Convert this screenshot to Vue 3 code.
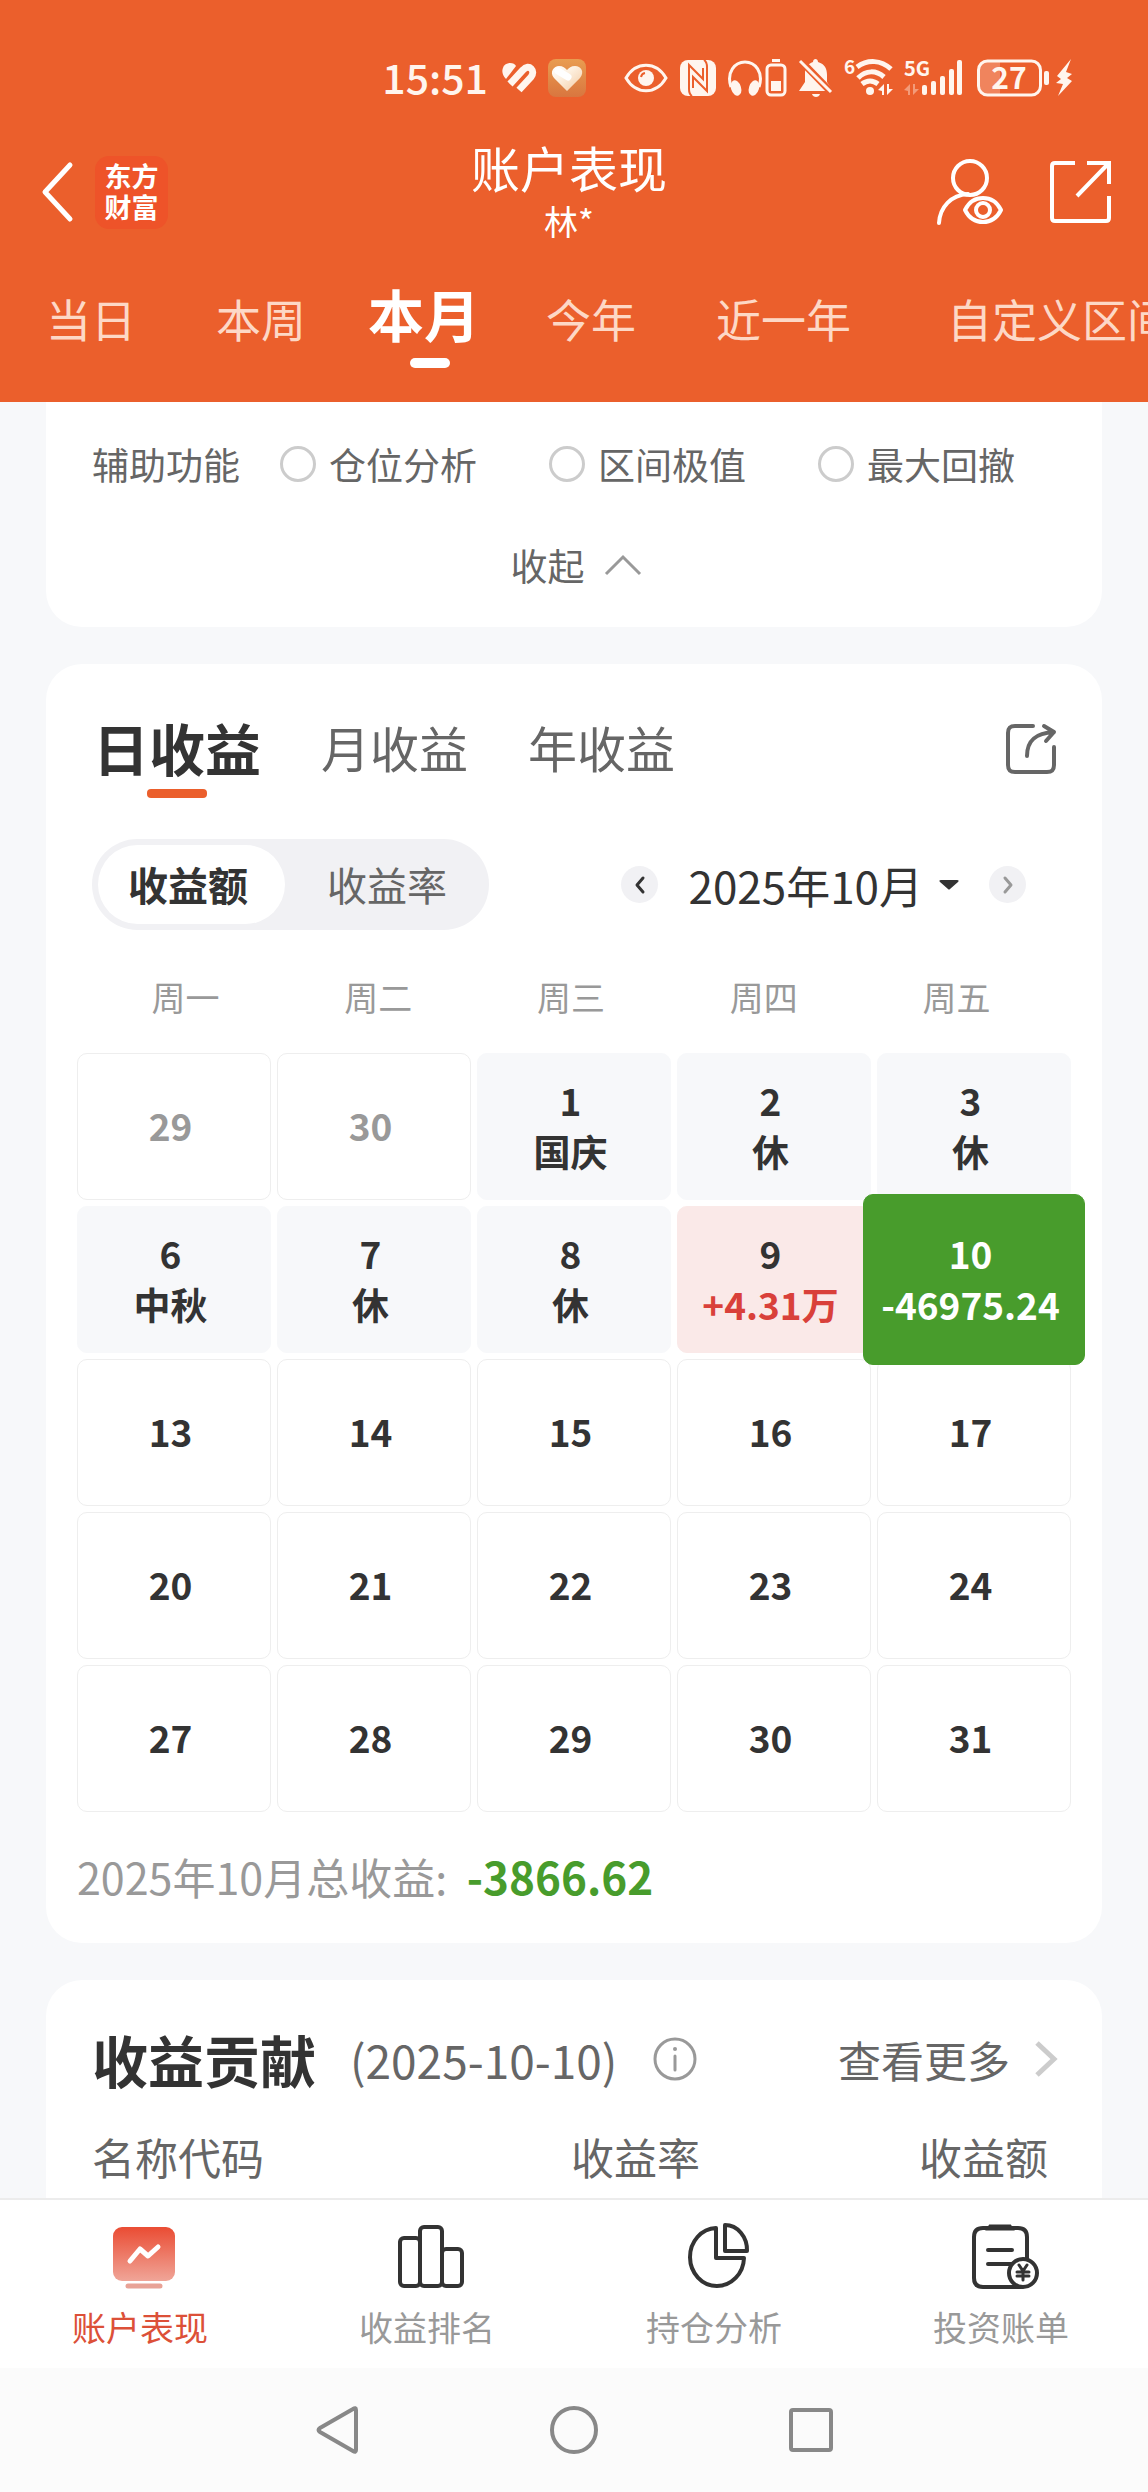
<script setup>
import { ref } from 'vue'

const ranges = ['当日', '本周', '本月', '今年', '近一年', '自定义区间']
const range = ref('本月')

const helpers = ['仓位分析', '区间极值', '最大回撤']
const helper = ref('')

const periods = ['日收益', '月收益', '年收益']
const period = ref('日收益')

const units = ['收益额', '收益率']
const unit = ref('收益额')

const weekdays = ['周一', '周二', '周三', '周四', '周五']
const days = [
  { day: 29, kind: 'outside' },
  { day: 30, kind: 'outside' },
  { day: 1, note: '国庆', kind: 'holiday' },
  { day: 2, note: '休', kind: 'holiday' },
  { day: 3, note: '休', kind: 'holiday' },
  { day: 6, note: '中秋', kind: 'holiday' },
  { day: 7, note: '休', kind: 'holiday' },
  { day: 8, note: '休', kind: 'holiday' },
  { day: 9, note: '+4.31万', kind: 'gain' },
  { day: 10, note: '-46975.24', kind: 'selected' },
  ...[13, 14, 15, 16, 17, 20, 21, 22, 23, 24, 27, 28, 29, 30, 31].map((day) => ({ day, kind: 'plain' })),
]
</script>

<template>
  <div class="app">
    <header class="top">
      <div class="status">
        <time class="clock">15:51</time>
        <svg width="36" height="40" viewBox="0 0 36 40" fill="none" stroke="#fff5ee" stroke-width="7">
          <path d="M4 21 C-3 14 1 5 8 5 C11 5 13 6 14 8 Z" fill="#fff5ee" stroke="none" />
          <path d="M8 26 L21 12 C27 5 34 13 29 19 L17 32" />
        </svg>
        <svg class="heart-app" width="38" height="40" viewBox="0 0 38 40">
          <defs>
            <linearGradient id="heartBg" x1="0" y1="0" x2="0" y2="1"><stop offset="0" stop-color="#e99c50" /><stop offset="1" stop-color="#d9763f" /></linearGradient>
            <linearGradient id="heartFg" x1="0" y1="0" x2="1" y2="1"><stop offset="0" stop-color="#fff" /><stop offset="0.4" stop-color="#fdf0e0" /><stop offset="1" stop-color="#f3c9a0" /></linearGradient>
          </defs>
          <rect y="1" width="38" height="38" rx="8" fill="url(#heartBg)" />
          <path d="M19 33 L6 20 C1 14 6 8 11 8 C15 8 17 10 19 12 C21 10 23 8 27 8 C33 8 37 14 32 20 Z" fill="url(#heartFg)" />
          <path d="M10 13 L20 19" stroke="#fff" stroke-width="7" stroke-linecap="round" />
        </svg>
        <svg width="46" height="40" viewBox="0 0 46 40" fill="none" stroke="#fff5ee" stroke-width="3">
          <path d="M2 20 C12 3 32 3 42 20 C32 37 12 37 2 20 Z" />
          <circle cx="22" cy="20" r="8" fill="#fff5ee" stroke="none" />
          <path d="M17 19 A5 5 0 0 1 21 15" stroke="#eb5f2c" stroke-width="2" />
        </svg>
        <svg width="38" height="40" viewBox="0 0 38 40" fill="none">
          <rect y="2" width="36" height="36" rx="8" fill="#fff5ee" />
          <path d="M12 38 C9 36 9 34 9 31 V7 L23 21 V10 M24 2 C27 4 27 6 27 9 V33 L13 19 V30" stroke="#eb5f2c" stroke-width="2" />
        </svg>
        <svg width="60" height="40" viewBox="0 0 60 40" fill="none" stroke="#fff5ee" stroke-width="3">
          <path d="M3 29 C-2 14 7 4 17 4 C27 4 36 14 31 29" />
          <ellipse cx="8" cy="30" rx="5" ry="8" transform="rotate(-18 8 30)" fill="#fff5ee" stroke="none" />
          <ellipse cx="26" cy="30" rx="5" ry="8" transform="rotate(18 26 30)" fill="#fff5ee" stroke="none" />
          <rect x="39" y="7" width="18" height="30" rx="4" />
          <path d="M44 2.500 h8" />
          <rect x="43" y="23" width="10" height="10" fill="#fff5ee" stroke="none" />
        </svg>
        <svg width="36" height="40" viewBox="0 0 36 40" fill="#fff5ee">
          <path d="M15 4 C15 0 20 0 20 4 C27 6 29 11 29 17 V24 L35 33 H1 L7 24 V15 C7 9 10 6 15 4 Z" />
          <path d="M14 36 H22 C21 40 15 40 14 36 Z" />
          <path d="M1 1 L34 35" stroke="#eb5f2c" stroke-width="7" />
          <path d="M2 3 L33 34" stroke="#fff5ee" stroke-width="3" />
        </svg>
        <svg width="50" height="40" viewBox="0 0 50 40" fill="none" stroke="#fff5ee" stroke-width="5">
          <text class="glyph" x="0" y="16" font-size="19">6</text>
          <path d="M13 9 C24 1 37 2 47 11" />
          <path d="M14 20 C22 12 32 12 40 19" />
          <path d="M18 26 C23 22 29 22 34 26" />
          <circle cx="26" cy="33" r="4" fill="#fff5ee" stroke="none" />
          <path d="M34 32 L40 26 V37 H38 V33 Z M43 26 V37 L49 31 H45 V26 Z" fill="#fff5ee" stroke="none" />
        </svg>
        <svg width="63" height="40" viewBox="0 0 63 40" fill="#fff5ee">
          <text class="glyph" x="0" y="18" font-size="20">5G</text>
          <path opacity="0.4" d="M0 32 L6 26 V37 H4 V33 Z M9 26 V37 L15 31 H11 V26 Z" />
          <rect x="18" y="27" width="5" height="10" rx="2" />
          <rect x="27" y="23" width="5" height="14" rx="2" />
          <rect x="36" y="18" width="5" height="19" rx="2" />
          <rect x="45" y="11" width="5" height="26" rx="2" />
          <rect x="53" y="2" width="5" height="35" rx="2" />
        </svg>
        <svg width="95" height="40" viewBox="0 0 95 40" fill="#fff5ee">
          <path d="M10 4 H23 V36 H10 C5 36 3 33 3 29 V11 C3 7 5 4 10 4 Z" opacity="0.25" />
          <rect x="1.500" y="3" width="62" height="34" rx="9" fill="none" stroke="#fff5ee" stroke-width="3" />
          <text class="glyph" x="32" y="31" font-size="30" text-anchor="middle">27</text>
          <rect x="67" y="13" width="5" height="14" rx="2" />
          <path d="M94 1 L80 18 L84 21 L79 25 L86 26 L81 38 L95 23 L90 20 L95 16 L89 14 Z" />
        </svg>
      </div>

      <div class="titlebar">
        <div class="left">
          <button class="icon-btn back" aria-label="返回">
            <svg width="32" height="56" viewBox="0 0 32 56" fill="none" stroke="#fff" stroke-width="5" stroke-linecap="round" stroke-linejoin="round"><path d="M29 2 L4 29 L29 56" transform="translate(0 -1)" /></svg>
          </button>
          <div class="logo">东方<br />财富</div>
        </div>
        <div class="heading">
          <h1>账户表现</h1>
          <p>林*</p>
        </div>
        <div class="right">
          <button class="icon-btn" aria-label="账户可见性">
            <svg width="66" height="66" viewBox="0 0 66 66" fill="none" stroke="#fff" stroke-width="4" stroke-linecap="round">
              <circle cx="33" cy="19" r="17" />
              <path d="M2 64 C3 48 14 36 31 35" />
              <path d="M28 51 Q34 39 46 39 Q58 39 64 51 Q58 63 46 63 Q34 63 28 51 Z" fill="#eb5f2c" stroke-linejoin="round" />
              <circle cx="46" cy="51" r="7" />
            </svg>
          </button>
          <button class="icon-btn" aria-label="分享">
            <svg width="66" height="66" viewBox="0 0 66 66" fill="none" stroke="#fff" stroke-width="4">
              <path d="M25 4 H5 C3 4 2 5 2 7 V59 C2 61 3 62 5 62 H56 C58 62 59 61 59 59 V37" />
              <path d="M37 4 H59 V25 M58 5 L27 37" />
            </svg>
          </button>
        </div>
      </div>

      <nav class="ranges" aria-label="区间">
        <button v-for="r in ranges" :key="r" :class="{ active: r === range, custom: r === '自定义区间' }" @click="range = r">{{ r }}</button>
      </nav>
    </header>

    <main>
      <section class="card tools">
        <div class="helper-row">
          <span>辅助功能</span>
          <div class="helper-list">
            <label v-for="h in helpers" :key="h"><input v-model="helper" type="radio" name="helper" :value="h" />{{ h }}</label>
          </div>
        </div>
        <button class="collapse">
          收起
          <svg width="36" height="20" viewBox="0 0 36 20" fill="none" stroke="#999" stroke-width="3"><path d="M1 19 L18 2 L35 19" /></svg>
        </button>
      </section>

      <section class="card calendar">
        <div class="periods">
          <button v-for="p in periods" :key="p" :class="{ active: p === period }" @click="period = p">{{ p }}</button>
          <button class="icon-btn share" aria-label="分享收益">
            <svg width="50" height="50" viewBox="0 0 50 50" fill="none" stroke="#666" stroke-width="4" stroke-linecap="round" stroke-linejoin="round">
              <path d="M27 2 H9 C4 2 2 4 2 9 V41 C2 46 4 48 9 48 H41 C46 48 48 46 48 41 V23" />
              <path d="M21 32 C21 17 29 9 48 8 M38 2 L48 8 L40 17" />
            </svg>
          </button>
        </div>

        <div class="controls">
          <div class="segment">
            <button v-for="u in units" :key="u" :class="{ active: u === unit }" @click="unit = u">{{ u }}</button>
          </div>
          <div class="month">
            <button class="step" aria-label="上个月">
              <svg width="10" height="18" viewBox="0 0 10 18" fill="none" stroke="#333" stroke-width="3" stroke-linecap="round" stroke-linejoin="round"><path d="M8 2 L2 9 L8 16" /></svg>
            </button>
            <button class="current">
              2025年10月
              <svg width="20" height="10" viewBox="0 0 20 10" fill="#333"><path d="M2 0 H18 C20 0 20 1 19 2 L11 9 Q10 10 9 9 L1 2 C0 1 0 0 2 0 Z" /></svg>
            </button>
            <button class="step" aria-label="下个月">
              <svg width="10" height="18" viewBox="0 0 10 18" fill="none" stroke="#999" stroke-width="3" stroke-linecap="round" stroke-linejoin="round"><path d="M2 2 L8 9 L2 16" /></svg>
            </button>
          </div>
        </div>

        <div class="weekdays"><span v-for="w in weekdays" :key="w">{{ w }}</span></div>
        <div class="days">
          <button v-for="(d, i) in days" :key="i" class="day" :class="d.kind">
            <span>{{ d.day }}</span>
            <span v-if="d.note" class="note">{{ d.note }}</span>
          </button>
        </div>
        <p class="total">2025年10月总收益: <strong>-3866.62</strong></p>
      </section>

      <section class="card contrib">
        <div class="contrib-head">
          <h2>收益贡献</h2>
          <span class="date">(2025-10-10)</span>
          <button class="icon-btn" aria-label="说明">
            <svg width="44" height="44" viewBox="0 0 44 44" fill="none" stroke="#999" stroke-width="3">
              <circle cx="22" cy="22" r="20" /><path d="M22 19 V33" stroke-linecap="round" /><circle cx="22" cy="12" r="2" fill="#999" stroke="none" />
            </svg>
          </button>
          <a href="#" class="more">
            查看更多
            <svg width="24" height="36" viewBox="0 0 24 36" fill="none" stroke="#ccc" stroke-width="5"><path d="M3 2 L20 18 L3 34" /></svg>
          </a>
        </div>
        <table>
          <thead><tr><th>名称代码</th><th>收益率</th><th>收益额</th></tr></thead>
        </table>
      </section>
    </main>

    <nav class="tabbar" aria-label="主导航">
      <a href="#" class="active">
        <svg width="68" height="66" viewBox="0 0 68 66" fill="none">
          <defs><linearGradient id="screen" x1="0" y1="0" x2="0" y2="1"><stop offset="0" stop-color="#ea4c33" /><stop offset="1" stop-color="#f0a598" /></linearGradient></defs>
          <rect x="3" y="4" width="62" height="54" rx="9" fill="url(#screen)" />
          <path d="M20 38 L30 26 L38 33 L48 24" stroke="#fff" stroke-width="5" stroke-linecap="round" stroke-linejoin="round" />
          <path d="M18 63 H50" stroke="#e8a296" stroke-width="5" stroke-linecap="round" />
        </svg>
        <span>账户表现</span>
      </a>
      <a href="#">
        <svg width="68" height="66" viewBox="0 0 68 66" fill="none" stroke="#333" stroke-width="4">
          <rect x="3" y="15" width="20" height="48" rx="4" /><rect x="23" y="4" width="22" height="59" rx="4" /><rect x="45" y="26" width="20" height="37" rx="4" />
        </svg>
        <span>收益排名</span>
      </a>
      <a href="#">
        <svg width="68" height="66" viewBox="0 0 68 66" fill="none" stroke="#333" stroke-width="4" stroke-linejoin="round">
          <path d="M32 5 A27 29 0 1 0 60 35 H32 Z" /><path d="M41 2 A22 25 0 0 1 63 28 H41 Z" />
        </svg>
        <span>持仓分析</span>
      </a>
      <a href="#">
        <svg width="68" height="66" viewBox="0 0 68 66" fill="none" stroke="#333" stroke-width="4" stroke-linecap="round">
          <path d="M56 36 V14 C56 8 53 5 47 5 H12 C6 5 3 8 3 14 V55 C3 61 6 64 12 64 H50" />
          <path d="M19 3 H39 L41 6 H17 Z" fill="#333" stroke-width="3" />
          <path d="M17 27 H41 M17 41 H42" />
          <circle cx="52" cy="50" r="14" fill="#fff" />
          <path d="M48 42 L52 48 L56 42 M52 48 V57 M46 49 H58 M46 53 H58" stroke-width="3" />
        </svg>
        <span>投资账单</span>
      </a>
    </nav>

    <div class="system">
      <button class="icon-btn" aria-label="系统返回"><svg width="48" height="48" viewBox="0 0 48 48"><path d="M43 4 V44 Q43 47 40 45 L7 26 Q4 24 7 22 L40 3 Q43 1 43 4 Z" /></svg></button>
      <button class="icon-btn" aria-label="主屏幕"><svg width="48" height="48" viewBox="0 0 48 48"><circle cx="24" cy="24" r="22" /></svg></button>
      <button class="icon-btn" aria-label="最近任务"><svg width="48" height="48" viewBox="0 0 48 48"><rect x="4" y="4" width="40" height="40" rx="2" /></svg></button>
    </div>
  </div>
</template>

<style>
body {
  margin: 0;
  background: #f7f8fa;
}
</style>

<style scoped>
.app {
  display: flex;
  flex-direction: column;
  min-height: 100vh;
  overflow-x: hidden;
  background: #f7f8fa;
  color: #333;
  font-family: "Noto Sans CJK SC", "Noto Sans", sans-serif;
}
.app * {
  box-sizing: border-box;
}
button {
  padding: 0;
  border: 0;
  background: none;
  color: inherit;
  font: inherit;
  white-space: nowrap;
}
a {
  color: inherit;
  text-decoration: none;
}
h1, h2, p {
  margin: 0;
  font-weight: 400;
}
svg {
  display: block;
  flex: none;
  overflow: visible;
}
.icon-btn {
  flex: none;
}

/* header */
.top {
  background: #eb5f2c;
  color: #fff;
}
.status {
  display: flex;
  justify-content: flex-end;
  align-items: center;
  gap: 10px;
  padding: 58px 76px 40px;
}
.clock {
  height: 40px;
  margin-right: 4px;
  font-size: 41px;
  font-weight: 500;
  line-height: 36px;
  color: #fff5ee;
}
.heart-app {
  margin-right: 28px;
}
.glyph {
  fill: #fff5ee;
  stroke: none;
  font-weight: 700;
}
.titlebar {
  display: grid;
  grid-template-columns: 1fr auto 1fr;
  align-items: center;
  padding: 0 32px 0 22px;
}
.left {
  display: flex;
  align-items: center;
}
.back {
  width: 73px;
  padding-left: 19px;
}
.logo {
  width: 73px;
  height: 73px;
  padding-top: 4px;
  border-radius: 14px;
  background: #ee5329;
  text-align: center;
  font-size: 27px;
  font-weight: 700;
  line-height: 31px;
}
.heading {
  text-align: center;
}
.heading h1 {
  font-size: 49px;
  line-height: 58px;
}
.heading p {
  font-size: 34px;
  line-height: 50px;
}
.right {
  display: flex;
  justify-content: flex-end;
  gap: 47px;
}
.ranges {
  display: flex;
  align-items: flex-start;
  gap: 80px;
  padding: 43px 0 34px 46px;
  overflow: hidden;
}
.ranges button {
  flex: none;
  font-size: 45px;
  line-height: 60px;
  color: #fdd8c6;
}
.ranges .active {
  display: flex;
  flex-direction: column;
  align-items: center;
  margin: 0 -14px 0 -18px;
  font-size: 56px;
  font-weight: 700;
  line-height: 48px;
  color: #fff;
}
.ranges .active::after {
  content: "";
  width: 40px;
  height: 10px;
  margin: 21px 0 0 12px;
  border-radius: 5px;
  background: #fff;
}
.ranges .custom {
  margin-left: 16px;
}

/* cards */
main {
  flex: 1;
  display: flex;
  flex-direction: column;
  gap: 37px;
  padding: 0 46px;
}
.card {
  border-radius: 36px;
  background: #fff;
}
.tools {
  padding: 34px 46px 33px;
  border-radius: 0 0 36px 36px;
  font-size: 37px;
  line-height: 56px;
  color: #666;
}
.helper-row {
  display: flex;
  gap: 40px;
}
.helper-list {
  display: flex;
  gap: 72px;
}
.helper-list label {
  display: flex;
  align-items: center;
  gap: 13px;
  white-space: nowrap;
}
.helper-list input {
  appearance: none;
  width: 36px;
  height: 36px;
  margin: 0;
  border: 3px solid #ccc;
  border-radius: 50%;
}
.helper-list input:checked {
  border: 10px solid #eb5f2c;
}
.collapse {
  display: flex;
  align-items: center;
  gap: 20px;
  margin: 45px auto 1px;
  padding-left: 3px;
}

.calendar {
  padding: 47px 31px 36px;
}
.periods {
  display: flex;
  align-items: flex-start;
  gap: 60px;
  padding: 0 15px 0 16px;
}
.periods button {
  font-size: 49px;
  line-height: 72px;
  color: #666;
}
.periods .active {
  display: flex;
  flex-direction: column;
  align-items: center;
  font-size: 56px;
  font-weight: 700;
  color: #333;
}
.periods .active::after {
  content: "";
  width: 60px;
  height: 9px;
  margin-top: 6px;
  border-radius: 4px;
  background: #eb5f2c;
}
.periods .share {
  margin: 13px 0 0 auto;
}
.controls {
  display: flex;
  justify-content: space-between;
  align-items: center;
  margin-top: 41px;
  padding: 0 45px 0 15px;
}
.segment {
  display: flex;
  padding: 6px;
  border-radius: 46px;
  background: #f1f1f4;
}
.segment button {
  padding: 0 37px 1px 30px;
  border-radius: 40px;
  font-size: 40px;
  line-height: 78px;
  color: #666;
}
.segment button + button {
  padding: 0 36px 1px 42px;
}
.segment .active {
  background: #fff;
  font-weight: 700;
  color: #333;
}
.month {
  display: flex;
  align-items: center;
  gap: 30px;
}
.step {
  display: flex;
  align-items: center;
  justify-content: center;
  width: 37px;
  height: 37px;
  border-radius: 50%;
  background: #f1f1f4;
}
.current {
  display: flex;
  align-items: center;
  gap: 16px;
  font-size: 44px;
  line-height: 60px;
}
.weekdays {
  display: grid;
  grid-template-columns: repeat(5, 1fr);
  margin-top: 45px;
  padding: 0 18px 0 12px;
  text-align: center;
  font-size: 34px;
  line-height: 44px;
  color: #999;
}
.days {
  display: grid;
  grid-template-columns: repeat(5, 1fr);
  grid-auto-rows: 147px;
  gap: 6px;
  margin-top: 34px;
}
.day {
  display: flex;
  flex-direction: column;
  align-items: center;
  justify-content: center;
  padding: 0 7px 2px 0;
  border: 1px solid #eee;
  border-radius: 10px;
  font-size: 37px;
  font-weight: 700;
  line-height: 51px;
}
.outside {
  color: #999;
}
.holiday {
  border-color: #f7f8fa;
  background: #f7f8fa;
}
.gain {
  border-color: #fae9e8;
  background: #fae9e8;
}
.gain .note {
  color: #d9403a;
}
.selected {
  z-index: 1;
  margin: -12px -14px;
  border-color: #489c2c;
  background: #489c2c;
  color: #fff;
}
.total {
  margin-top: 34px;
  font-size: 43px;
  line-height: 61px;
  color: #999;
}
.total strong {
  margin-left: 10px;
  font-size: 44px;
  color: #489c2c;
}

.contrib {
  flex: 1;
  padding: 43px 44px 10px 46px;
  border-radius: 36px 36px 0 0;
  color: #666;
}
.contrib-head {
  display: flex;
  align-items: center;
  font-size: 43px;
  line-height: 72px;
}
.contrib-head h2 {
  font-size: 56px;
  font-weight: 700;
  color: #333;
}
.date {
  margin: 0 36px 0 34px;
  font-size: 46px;
}
.more {
  display: flex;
  align-items: center;
  gap: 24px;
  margin-left: auto;
}
table {
  width: 100%;
  margin-top: 31px;
  padding-right: 10px;
  border-spacing: 0;
  table-layout: fixed;
}
th {
  padding: 0;
  text-align: right;
  font-size: 43px;
  font-weight: 400;
  line-height: 60px;
}
th:first-child {
  width: 40%;
  text-align: left;
}
th:last-child {
  width: 348px;
}

/* bottom bars */
.tabbar {
  display: grid;
  grid-template-columns: repeat(4, 1fr);
  padding: 23px 0 21px;
  border-top: 2px solid #ececec;
  background: #fff;
}
.tabbar a {
  display: flex;
  flex-direction: column;
  align-items: center;
  gap: 18px;
  font-size: 34px;
  line-height: 40px;
  color: #999;
}
.tabbar span {
  padding-right: 7px;
}
.tabbar .active {
  color: #dc5038;
}
.system {
  display: flex;
  justify-content: center;
  gap: 189px;
  padding: 38px 0;
  background: #fbfbfb;
}
.system svg {
  fill: none;
  stroke: #888;
  stroke-width: 4px;
}
</style>
